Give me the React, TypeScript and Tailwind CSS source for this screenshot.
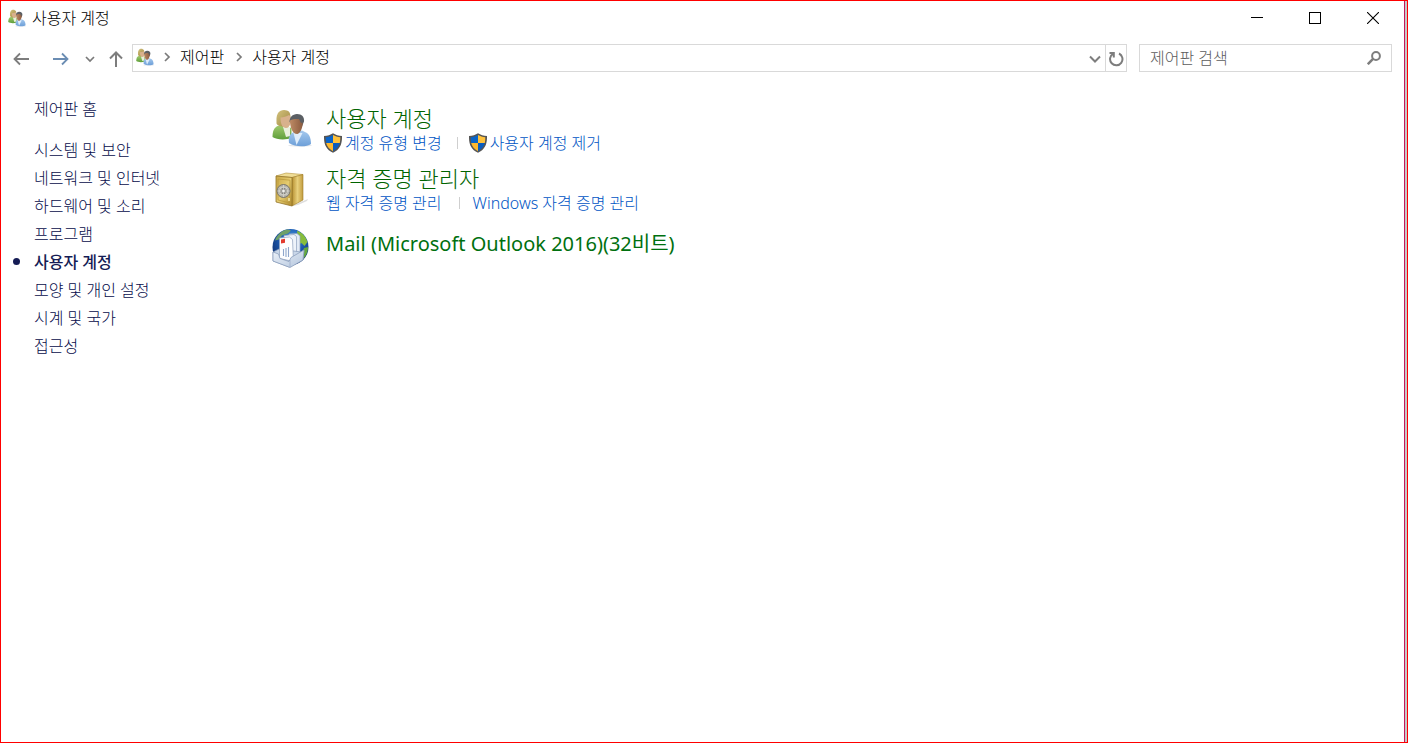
import React, { useState } from "react";
import clsx from "clsx";

type Task = {
  label: string;
  shield?: boolean;
};

type Category = {
  title: string;
  icon: React.ReactNode;
  tasks: Task[];
};

const UsersIcon = ({ className }: { className?: string }) => (
  <svg viewBox="0 0 40 40" className={className} aria-hidden="true">
    <defs>
      <linearGradient id="greenShirt" x1="0" y1="0" x2="0" y2="1">
        <stop offset="0" stopColor="#a3cb70" />
        <stop offset="1" stopColor="#5f9f3a" />
      </linearGradient>
      <linearGradient id="blueShirt" x1="0" y1="0" x2="0" y2="1">
        <stop offset="0" stopColor="#a5c9ee" />
        <stop offset="1" stopColor="#6d9fd8" />
      </linearGradient>
      <linearGradient id="blonde" x1="0" y1="0" x2="1" y2="1">
        <stop offset="0" stopColor="#d3c27c" />
        <stop offset="1" stopColor="#a08843" />
      </linearGradient>
      <linearGradient id="tan" x1="0" y1="0" x2="1" y2="0">
        <stop offset="0" stopColor="#bd8a64" />
        <stop offset="1" stopColor="#8c5c40" />
      </linearGradient>
    </defs>
    <ellipse cx="28" cy="37.500" rx="12" ry="1.200" fill="#e3e6ea" />
    <path d="M0.500 29c0-6 1.500-9 5-11l6-1 8 3v10c-5 2-15 2-19-1z" fill="url(#greenShirt)" />
    <path d="M11 19l3 10 4-1v-9z" fill="#e9f0dc" />
    <path d="M4.500 15.500C4.500 12 4 8 6 5c2-3 6-3.800 9-2.500 3 1 3.500 4 3.500 7L15 17l-4 1.500c-3 0-6-1-6.500-3z" fill="url(#blonde)" />
    <path d="M8.500 9.500c3 0 6-1 8.500-2.500 2 1 2 5 1.500 8-.5 3.500-3 5.500-5 5-4-.5-5-6-5-10.500z" fill="#d8b18c" />
    <path d="M17 35c-1-7 2-10 5-11l8-1.500 5 2.500c3 2 4 7 4 11-4 3-15.500 3.500-22-1z" fill="url(#blueShirt)" />
    <path d="M21.500 25l3 12 6-12z" fill="#dfedfb" />
    <path d="M17.500 14c0-5 3-7.800 7.500-8 5 0 7.500 3 7 7.500l-2 5-8-2z" fill="#5b5f64" />
    <path d="M18 12.500c2.500-1.500 6-1.700 9-1.500l2 4 1.500-.5c.5 3-1 10-5 11.500-4.500.5-7.500-6-7.500-13.500z" fill="url(#tan)" />
  </svg>
);

const SafeIcon = () => (
  <svg viewBox="0 0 40 40" className="h-10 w-10" aria-hidden="true">
    <defs>
      <linearGradient id="safeFront" x1="0" y1="0" x2="1" y2="1">
        <stop offset="0" stopColor="#c8a645" />
        <stop offset="0.500" stopColor="#e5cc70" />
        <stop offset="1" stopColor="#b08a2d" />
      </linearGradient>
      <linearGradient id="safeSide" x1="0" y1="0" x2="1" y2="0">
        <stop offset="0" stopColor="#b89132" />
        <stop offset="0.500" stopColor="#e8d07c" />
        <stop offset="1" stopColor="#c29c3f" />
      </linearGradient>
    </defs>
    <path d="M20 38l11-5 5-2-1 2-9 4z" fill="#dedede" />
    <path d="M4 8l10-3 17 1.500-11 3z" fill="#efdd96" stroke="#b5933c" strokeWidth="0.600" />
    <path d="M20 9.500l11-3V32l-11 6z" fill="url(#safeSide)" stroke="#9d7c2a" strokeWidth="0.600" />
    <path d="M4 8l16 1.500V38L4 34z" fill="url(#safeFront)" stroke="#93732a" strokeWidth="0.800" />
    <path d="M6 11l12 1.200V35L6 32z" fill="none" stroke="#b8963a" strokeWidth="0.700" />
    <circle cx="11.500" cy="23" r="6.500" fill="#b5b4ac" stroke="#77756c" />
    <circle cx="11.500" cy="23" r="4" fill="#85847d" stroke="#d5d5d0" />
    <path d="M11.500 17v12M5.500 23h12M7.500 19l8 8M15.500 19l-8 8" stroke="#d3d2cb" strokeWidth="0.900" />
    <circle cx="11.500" cy="23" r="1.800" fill="#f0f0ec" stroke="#777" strokeWidth="0.500" />
    <path d="M17 30v3" stroke="#f7eaaa" strokeWidth="1.500" />
  </svg>
);

const MailIcon = () => (
  <svg viewBox="0 0 40 40" className="h-10 w-10" aria-hidden="true">
    <defs>
      <radialGradient id="globe" cx="0.550" cy="0.300" r="0.700">
        <stop offset="0" stopColor="#4aa3e8" />
        <stop offset="0.500" stopColor="#1c58ae" />
        <stop offset="1" stopColor="#102f6c" />
      </radialGradient>
      <linearGradient id="tray" x1="0" y1="0" x2="1" y2="1">
        <stop offset="0" stopColor="#eef3f9" />
        <stop offset="1" stopColor="#b3c5dd" />
      </linearGradient>
    </defs>
    <circle cx="18.500" cy="19" r="18" fill="url(#globe)" />
    <path d="M4 10C7 5 11 2 16 1.500l3 1-3 3-6 2-3 4-4 1z" fill="#6fa068" />
    <path d="M25 3c5 1 9 6 10.500 11l-3 4-3-3-2 1-3-6 1-3z" fill="#86bd3d" />
    <path d="M32 20l4-1c0 5-2 9-5 12l-1-5z" fill="#63a83e" />
    <path d="M17 6l8-.5 3 2.500v19H17z" fill="#e3ebf6" stroke="#8fa2bf" strokeWidth="0.700" />
    <path d="M12 7.500l10-1 2.500 2V30H12z" fill="#eef3fa" stroke="#8fa2bf" strokeWidth="0.700" />
    <path d="M1 24l6-3 22 3 3-2-1 10-14 7L1 33z" fill="#c9d7e9" stroke="#8498b8" strokeWidth="0.700" />
    <path d="M7.500 10l10-1 3 2.500 1 22-14-3z" fill="#fdfeff" stroke="#8fa2bf" strokeWidth="0.700" />
    <path d="M9 11.500l4-.7v4l-4 .7z" fill="#e23a2e" />
    <path d="M11.500 21v7M14 20v9M16.500 19v10" stroke="#8ea6cc" strokeWidth="1.100" />
    <path d="M1 24l5.500 2 1.500 4.500 9 3 2-4L32 22l-1 10-13 7.500L1 33z" fill="url(#tray)" stroke="#8498b8" strokeWidth="0.700" />
    <path d="M18 32v7" stroke="#98abc8" strokeWidth="0.700" />
  </svg>
);

const ShieldIcon = () => (
  <svg viewBox="0 0 18 20" className="h-5 w-[18px] shrink-0" aria-hidden="true">
    <path
      d="M9 .3C6.500 2 3.500 2.800 0 3c-.2 8 1.800 13.500 9 16.800C16.200 16.500 18.200 11 18 3 14.500 2.800 11.500 2 9 .3z"
      fill="#555"
    />
    <path d="M9 2C6.800 3.300 4.400 4 1.700 4.300c0 2 .1 3.700.5 5.700H9z" fill="#0a64c8" />
    <path d="M9 2c2.200 1.300 4.600 2 7.300 2.300 0 2-.1 3.700-.5 5.700H9z" fill="#ffc23c" />
    <path d="M9 10H2.200c.9 3.600 3 6.300 6.800 8.200z" fill="#ffb92e" />
    <path d="M9 10h6.800c-.9 3.600-3 6.300-6.800 8.200z" fill="#0a5cbe" />
  </svg>
);

const Chevron = ({ down = false }: { down?: boolean }) => (
  <svg viewBox="0 0 10 10" className="h-2.5 w-2.5 shrink-0" aria-hidden="true">
    <path
      d={down ? "M1 3l4 4 4-4" : "M3 1l4 4-4 4"}
      fill="none"
      stroke="#7a7a7a"
      strokeWidth="1.700"
    />
  </svg>
);

const sidebarLinks = [
  "시스템 및 보안",
  "네트워크 및 인터넷",
  "하드웨어 및 소리",
  "프로그램",
  "사용자 계정",
  "모양 및 개인 설정",
  "시계 및 국가",
  "접근성",
];

const categories: Category[] = [
  {
    title: "사용자 계정",
    icon: <UsersIcon className="h-10 w-10" />,
    tasks: [
      { label: "계정 유형 변경", shield: true },
      { label: "사용자 계정 제거", shield: true },
    ],
  },
  {
    title: "자격 증명 관리자",
    icon: <SafeIcon />,
    tasks: [{ label: "웹 자격 증명 관리" }, { label: "Windows 자격 증명 관리" }],
  },
  {
    title: "Mail (Microsoft Outlook 2016)(32비트)",
    icon: <MailIcon />,
    tasks: [],
  },
];

const TitleBar = () => (
  <header className="flex h-[34px] items-center pl-[7px] pr-0.5">
    <UsersIcon className="h-[18px] w-[18px]" />
    <h1 className="ml-1.5 flex-1">사용자 계정</h1>
    <button aria-label="최소화" className="flex h-full w-[58px] items-center justify-center">
      <svg viewBox="0 0 12 12" className="h-3 w-3" shapeRendering="crispEdges">
        <path d="M0 5.500h12" stroke="#000" />
      </svg>
    </button>
    <button aria-label="최대화" className="flex h-full w-[58px] items-center justify-center">
      <svg viewBox="0 0 12 12" className="h-3 w-3" shapeRendering="crispEdges">
        <path d="M.5.5h11v11H.5z" fill="none" stroke="#000" />
      </svg>
    </button>
    <button aria-label="닫기" className="flex h-full w-[58px] items-center justify-center">
      <svg viewBox="0 0 12 12" className="h-3 w-3">
        <path d="M0 0l12 12M12 0L0 12" stroke="#000" strokeWidth="1.100" />
      </svg>
    </button>
  </header>
);

const NavBar = () => {
  const [query, setQuery] = useState("");

  return (
    <div className="mt-[9px] flex h-7 items-stretch pr-3">
      <button aria-label="뒤로" className="flex w-10 items-center justify-center pt-0.5">
        <svg viewBox="0 0 16 14" className="h-3.5 w-4" fill="none" stroke="#7d7d7d" strokeWidth="1.800">
          <path d="M16 7H1.500M7 1.500L1.500 7 7 12.500" />
        </svg>
      </button>
      <button aria-label="앞으로" className="flex w-10 items-center justify-center pt-0.5">
        <svg viewBox="0 0 16 14" className="h-3.5 w-4" fill="none" stroke="#6b8db3" strokeWidth="1.800">
          <path d="M0 7h14.500M9 1.500L14.500 7 9 12.500" />
        </svg>
      </button>
      <button aria-label="최근 위치" className="flex w-[18px] items-center justify-center pt-0.5">
        <Chevron down />
      </button>
      <button aria-label="위로" className="flex w-[33px] items-center justify-center pt-0.5">
        <svg viewBox="0 0 14 16" className="h-4 w-3.5" fill="none" stroke="#7d7d7d" strokeWidth="2">
          <path d="M7 16V1.500M1 7.500l6-6 6 6" />
        </svg>
      </button>

      <div className="flex min-w-0 flex-1 border border-[#d9d9d9]">
        <nav className="flex flex-1 items-center pb-0.5 pl-[3px]">
          <UsersIcon className="h-[18px] w-[18px]" />
          <ul className="ml-2 flex items-center">
            {["제어판", "사용자 계정"].map((crumb) => (
              <li key={crumb} className="mr-2.5 flex items-center gap-2">
                <Chevron />
                <a href="#">{crumb}</a>
              </li>
            ))}
          </ul>
        </nav>
        <button aria-label="이전 위치" className="flex w-5 items-center justify-center pt-0.5">
          <svg viewBox="0 0 12 12" className="h-3 w-3" fill="none" stroke="#7d7d7d" strokeWidth="2">
            <path d="M1 3.500l5 5 5-5" />
          </svg>
        </button>
        <button
          aria-label="새로 고침"
          className="flex w-[21px] items-center justify-center border-l border-[#d9d9d9] pt-0.5"
        >
          <svg viewBox="0 0 16 16" className="h-4 w-4" fill="none" stroke="#7d7d7d" strokeWidth="2">
            <path d="M11 2.500a6.200 6.200 0 1 1-6 .3" />
            <path d="M1.500 2h4.300v4.500" />
          </svg>
        </button>
      </div>

      <div className="ml-3 flex w-[253px] items-center border border-[#d9d9d9] px-2.5">
        <input
          type="text"
          aria-label="제어판 검색"
          placeholder="제어판 검색"
          value={query}
          onChange={(e) => setQuery(e.target.value)}
          className="min-w-0 flex-1 placeholder:text-[#5c5c5c] outline-none"
        />
        <svg viewBox="0 0 14 14" className="h-3.5 w-3.5" fill="none" stroke="#7d7d7d" aria-hidden="true">
          <circle cx="9" cy="5" r="3.900" strokeWidth="2" />
          <path d="M6.300 7.700L.8 13.200" strokeWidth="2.500" />
        </svg>
      </div>
    </div>
  );
};

const Sidebar = () => (
  <aside className="w-[271px] shrink-0 pl-[33px] text-[#060b4a]">
    <a href="#" className="block leading-7">
      제어판 홈
    </a>
    <ul className="mt-[13px]">
      {sidebarLinks.map((link) => {
        const active = link === "사용자 계정";
        return (
          <li key={link} className="relative leading-7">
            {active && <span className="absolute -left-[21px] top-[10px] h-[7px] w-[7px] rounded-full bg-[#151c55]" />}
            <a href="#" className={clsx(active && "font-medium text-[#151c55]")}>
              {link}
            </a>
          </li>
        );
      })}
    </ul>
  </aside>
);

const CategoryItem = ({ category }: { category: Category }) => {
  const hasTasks = category.tasks.length > 0;

  return (
    <li className="flex gap-3">
      <div className="pt-px">{category.icon}</div>
      <div className={clsx(!hasTasks && "pt-1.5")}>
        <h2
          className={clsx(
            "mb-0.5 pl-0.5 leading-[22px]",
            hasTasks ? "text-[22px] text-[#006400]" : "text-xl font-normal text-[#00700f]"
          )}
        >
          <a href="#">{category.title}</a>
        </h2>
        {hasTasks && (
          <ul className="flex h-6 items-center">
            {category.tasks.map((task, i) => (
              <li key={task.label} className="flex items-center">
                {i > 0 && <span className="ml-[15px] mr-[11px] h-3 w-px bg-[#cfcfcf]" />}
                <a
                  href="#"
                  className={clsx("flex items-center gap-[3px] leading-6 text-[#0055c4]", !task.shield && "px-0.5")}
                >
                  {task.shield && <ShieldIcon />}
                  {task.label}
                </a>
              </li>
            ))}
          </ul>
        )}
      </div>
    </li>
  );
};

const App = () => {
  return (
    <div className="flex min-h-screen border border-[#ff0000] bg-white font-['Noto_Sans','Noto_Sans_CJK_KR',sans-serif] text-base font-light leading-6 text-black">
      <div className="min-w-0 flex-1">
        <TitleBar />
        <NavBar />
        <div className="flex pt-[23px]">
          <Sidebar />
          <main className="min-w-0 flex-1 pt-3">
            <ul className="flex flex-col gap-3">
              {categories.map((category) => (
                <CategoryItem key={category.title} category={category} />
              ))}
            </ul>
          </main>
        </div>
      </div>
      <div className="w-[3px] shrink-0 border-l border-[#c2185b] bg-[#c8c8c8]" />
    </div>
  );
};

export default App;
